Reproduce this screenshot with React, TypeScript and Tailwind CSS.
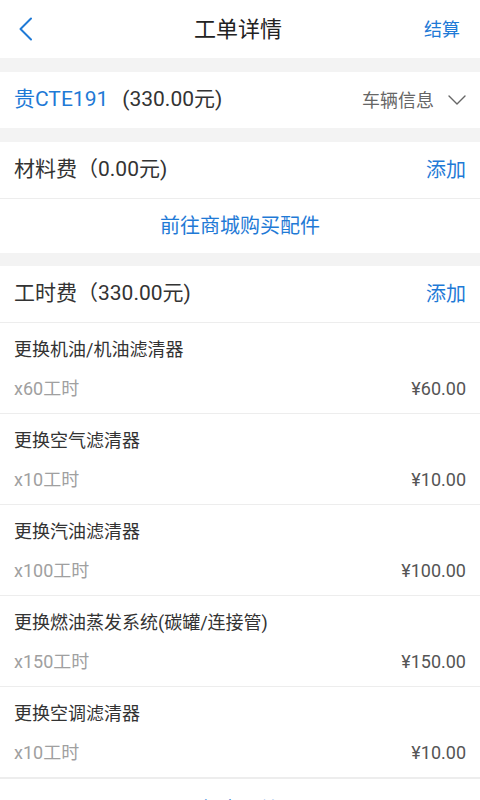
const FONT = { fontFamily: 'Roboto, "Noto Sans CJK SC", sans-serif' };

const ITEMS = [
  { name: '更换机油/机油滤清器', hours: 'x60工时', price: '¥60.00' },
  { name: '更换空气滤清器', hours: 'x10工时', price: '¥10.00' },
  { name: '更换汽油滤清器', hours: 'x100工时', price: '¥100.00' },
  { name: '更换燃油蒸发系统(碳罐/连接管)', hours: 'x150工时', price: '¥150.00' },
  { name: '更换空调滤清器', hours: 'x10工时', price: '¥10.00' },
];

function SectionHeader({ title, amount }: { title: string; amount: string }) {
  return (
    <div className="flex h-[56px] items-center justify-between px-[14px]">
      <span className="text-[21px] text-[#333]">
        {title}（{amount})
      </span>
      <span className="text-[20px] text-[#1f7ad6]">添加</span>
    </div>
  );
}

function LaborItem({ name, hours, price }: { name: string; hours: string; price: string }) {
  return (
    <div className="flex h-[91px] flex-col justify-center gap-[17px] border-t border-[#ededed] px-[14px] pt-[3px]">
      <div className="text-[18px] leading-[22px] text-[#333]">{name}</div>
      <div className="flex items-center justify-between text-[18px] leading-[22px]">
        <span className="text-[#a0a0a0]">{hours}</span>
        <span className="text-[#555]">{price}</span>
      </div>
    </div>
  );
}

export default function App() {
  return (
    <div className="h-[800px] w-[480px] overflow-hidden bg-[#f3f3f3]" style={FONT}>
      <div className="flex h-[58px] items-center justify-between bg-white pl-[18px] pr-[20px]">
        <svg width="16" height="24" viewBox="0 0 16 24" fill="none">
          <path d="M13 1.5 L2.5 12 L13 22.5" stroke="#1f7ad6" strokeWidth="2" strokeLinecap="round" strokeLinejoin="round" />
        </svg>
        <span className="ml-[18px] text-[22px] text-[#222]">工单详情</span>
        <span className="text-[18px] text-[#1f7ad6]">结算</span>
      </div>

      <div className="mt-[14px] flex h-[56px] items-center justify-between bg-white px-[14px]">
        <div className="flex items-center gap-[14px] text-[21px]">
          <span className="text-[#1f7ad6]">贵CTE191</span>
          <span className="text-[#333]">(330.00元)</span>
        </div>
        <div className="flex items-center gap-[14px]">
          <span className="text-[18px] text-[#666]">车辆信息</span>
          <svg width="18" height="10" viewBox="0 0 18 10" fill="none">
            <path d="M1 1 L9 9 L17 1" stroke="#666" strokeWidth="1.4" strokeLinecap="round" strokeLinejoin="round" />
          </svg>
        </div>
      </div>

      <div className="mt-[14px] bg-white">
        <SectionHeader title="材料费" amount="0.00元" />
        <div className="flex h-[55px] items-center justify-center border-t border-[#ededed] text-[20px] text-[#1f7ad6]">
          前往商城购买配件
        </div>
      </div>

      <div className="mt-[13px] bg-white">
        <SectionHeader title="工时费" amount="330.00元" />
        {ITEMS.map((item) => (
          <LaborItem key={item.name} {...item} />
        ))}
        <div className="flex h-[40px] items-start justify-center border-t-2 border-[#ededed] pt-[17px] text-[19px] text-[#1f7ad6]">
          提交工单
        </div>
      </div>
    </div>
  );
}
